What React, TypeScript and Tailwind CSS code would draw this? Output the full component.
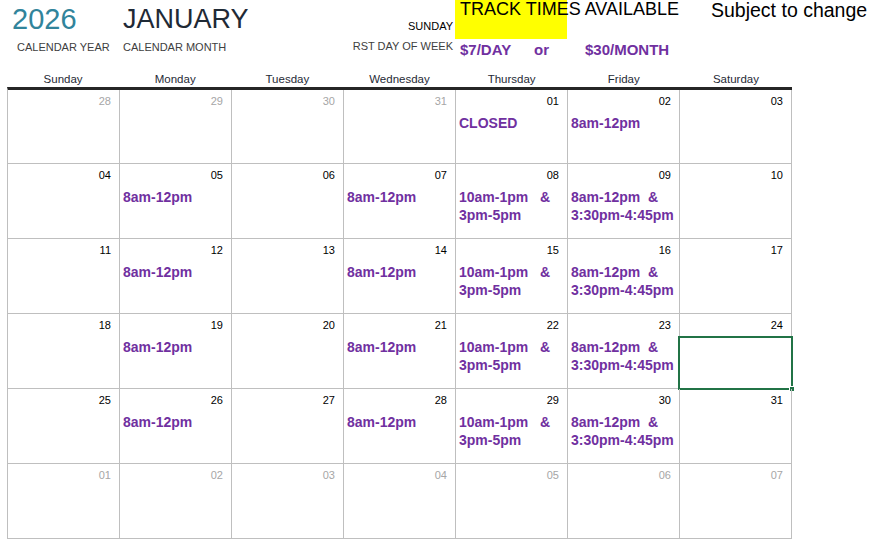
const DAY_NAMES = ['Sunday', 'Monday', 'Tuesday', 'Wednesday', 'Thursday', 'Friday', 'Saturday']

type Cell = {
  day: string
  muted?: boolean
  lines?: string[]
  selected?: boolean
}

const MORNING = ['8am-12pm']
const THURSDAY = ['10am-1pm   &', '3pm-5pm']
const FRIDAY = ['8am-12pm  &', '3:30pm-4:45pm']

const regularWeek = (start: number, selectSaturday = false): Cell[] => {
  const d = (n: number) => String(n).padStart(2, '0')
  return [
    { day: d(start) },
    { day: d(start + 1), lines: MORNING },
    { day: d(start + 2) },
    { day: d(start + 3), lines: MORNING },
    { day: d(start + 4), lines: THURSDAY },
    { day: d(start + 5), lines: FRIDAY },
    { day: d(start + 6), selected: selectSaturday },
  ]
}

const WEEKS: Cell[][] = [
  [
    { day: '28', muted: true },
    { day: '29', muted: true },
    { day: '30', muted: true },
    { day: '31', muted: true },
    { day: '01', lines: ['CLOSED'] },
    { day: '02', lines: MORNING },
    { day: '03' },
  ],
  regularWeek(4),
  regularWeek(11),
  regularWeek(18, true),
  regularWeek(25),
  ['01', '02', '03', '04', '05', '06', '07'].map((day) => ({ day, muted: true })),
]

export default function App() {
  return (
    <div className="w-[876px] h-[546px] bg-white overflow-hidden font-['Liberation_Sans',Arial,sans-serif] text-black">
      {/* Header */}
      <div className="ml-[7px] h-[72px] grid grid-cols-[112px_112px_224px_112px_112px_1fr]">
        <div className="flex flex-col">
          <div className="pt-[3px] pl-[5px] text-[29px] leading-[32px] text-[#31849b]">2026</div>
          <div className="mt-[5px] pl-[10px] text-[11px] leading-[14px] text-[#404040] whitespace-nowrap">
            CALENDAR YEAR
          </div>
        </div>
        <div className="flex flex-col">
          <div className="pt-[3px] pl-[4px] text-[27px] leading-[32px] text-[#1f2a36] whitespace-nowrap">
            JANUARY
          </div>
          <div className="mt-[5px] pl-[4px] text-[11px] leading-[14px] text-[#404040] whitespace-nowrap">
            CALENDAR MONTH
          </div>
        </div>
        <div className="flex flex-col items-end pr-[2px]">
          <div className="pt-[19px] text-[11px] leading-[14px]">SUNDAY</div>
          <div className="mt-[6px] text-[11px] leading-[14px] text-[#404040] whitespace-nowrap">
            RST DAY OF WEEK
          </div>
        </div>
        <div className="flex flex-col">
          <div className="h-[39px] bg-[#ffff00] pl-[5px] text-[18px] leading-[19px] whitespace-nowrap">
            TRACK TIMES AVAILABLE
          </div>
          <div className="mt-[2px] pl-[5px] flex text-[15px] leading-[18px] font-bold text-[#7030a0] whitespace-nowrap">
            <span className="w-[74px] shrink-0">$7/DAY</span>
            <span className="w-[51px] shrink-0">or</span>
            <span className="shrink-0">$30/MONTH</span>
          </div>
        </div>
        <div />
        <div className="pl-[32px] text-[19.5px] leading-[20px] whitespace-nowrap">Subject to change</div>
      </div>

      {/* Weekday names */}
      <div className="ml-[7px] w-[785px] h-[15px] grid grid-cols-7 text-[11.5px] leading-[15px] text-[#1f2a36]">
        {DAY_NAMES.map((name) => (
          <div key={name} className="text-center">
            {name}
          </div>
        ))}
      </div>

      {/* Month grid */}
      <div className="ml-[7px] w-[785px] border-t-[3px] border-l border-t-[#262626] border-l-[#bfbfbf]">
        {WEEKS.map((week, wi) => (
          <div key={wi} className={`grid grid-cols-7 ${wi === 0 ? 'h-[74px]' : 'h-[75px]'}`}>
            {week.map((cell, ci) => (
              <div key={ci} className="relative border-r border-b border-[#bfbfbf]">
                <div
                  className={`pt-[4px] pr-[8px] text-right text-[11px] leading-[14px] ${
                    cell.muted ? 'text-[#a6a6a6]' : 'text-black'
                  }`}
                >
                  {cell.day}
                </div>
                {cell.lines && (
                  <div className="mt-[6px] pl-[3px] text-[14px] leading-[18px] font-bold text-[#7030a0] whitespace-pre">
                    {cell.lines.map((line) => (
                      <div key={line}>{line}</div>
                    ))}
                  </div>
                )}
                {cell.selected && (
                  <div className="absolute top-[22px] left-[-2px] right-[-2px] bottom-[-2px] border-2 border-[#217346]">
                    <div className="absolute right-[-4px] bottom-[-4px] w-[6px] h-[6px] bg-[#217346] border border-white" />
                  </div>
                )}
              </div>
            ))}
          </div>
        ))}
      </div>
    </div>
  )
}
